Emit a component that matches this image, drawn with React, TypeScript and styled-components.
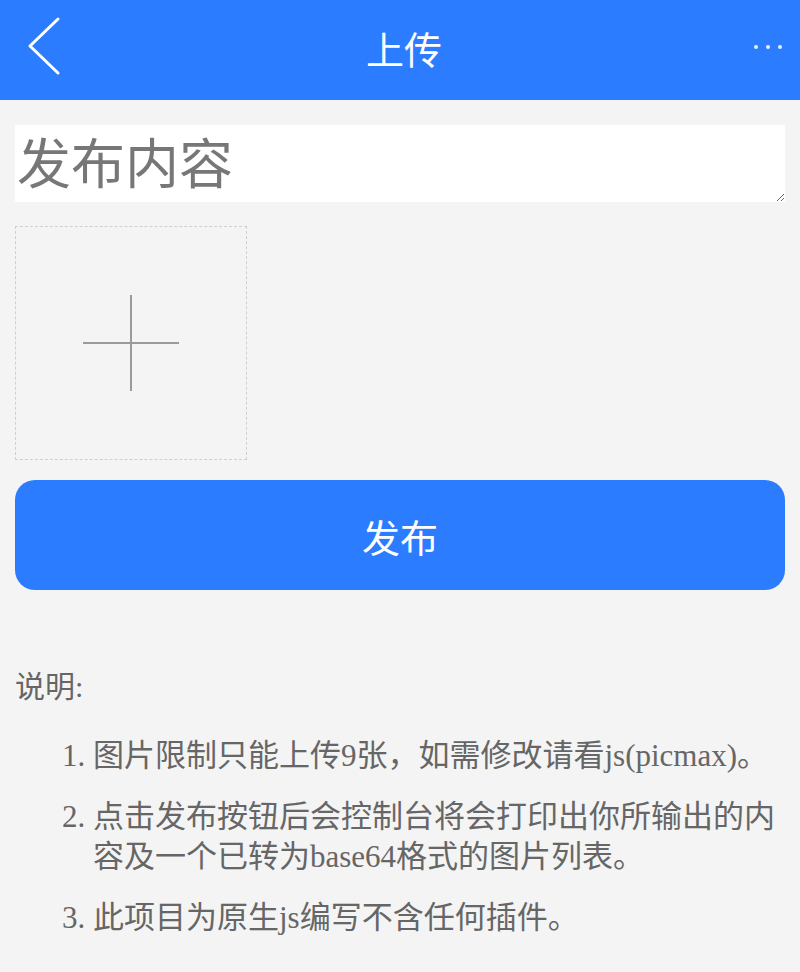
import React from "react";
import styled, { createGlobalStyle } from "styled-components";

const GlobalStyle = createGlobalStyle`
  html, body {
    margin: 0;
    padding: 0;
    background: #f4f4f4;
  }
  body {
    font-family: "Liberation Serif", "Noto Sans CJK SC", serif;
  }
`;

const notes = [
  "图片限制只能上传9张，如需修改请看js(picmax)。",
  "点击发布按钮后会控制台将会打印出你所输出的内容及一个已转为base64格式的图片列表。",
  "此项目为原生js编写不含任何插件。",
];

export default function App() {
  return (
    <>
      <GlobalStyle />
      <ScPage>
        <ScHeader>
          <ScBack aria-label="返回">
            <svg width="40" height="64" viewBox="0 0 40 64" fill="none">
              <path
                d="M32 4 L4 31 L32 58"
                stroke="#fff"
                strokeWidth="3"
                strokeLinecap="round"
                strokeLinejoin="round"
              />
            </svg>
          </ScBack>
          <ScTitle>上传</ScTitle>
          <ScMore aria-label="更多">
            <ScDot />
            <ScDot />
            <ScDot />
          </ScMore>
        </ScHeader>

        <ScContent>
          <ScTextArea placeholder="发布内容" />
          <ScUploadBox>
            <ScPlus />
          </ScUploadBox>
          <ScSubmit>发布</ScSubmit>

          <ScNoteTitle>说明:</ScNoteTitle>
          <ScNoteList>
            {notes.map((note) => (
              <ScNoteItem key={note}>{note}</ScNoteItem>
            ))}
          </ScNoteList>
        </ScContent>
      </ScPage>
    </>
  );
}

const ScPage = styled.div`
  min-height: 972px;
  background: #f4f4f4;
`;

const ScHeader = styled.header`
  height: 100px;
  background: #2b7cff;
  display: flex;
  align-items: center;
  justify-content: space-between;
  padding: 0 18px 0 26px;
  box-sizing: border-box;
`;

const ScBack = styled.div`
  width: 60px;
  height: 64px;
  display: flex;
  align-items: center;
  margin-top: -6px;
`;

const ScTitle = styled.h1`
  margin: -6px 0 0;
  font-family: "Noto Sans CJK SC", sans-serif;
  font-weight: 400;
  font-size: 38px;
  color: #fff;
`;

const ScMore = styled.div`
  width: 60px;
  display: flex;
  justify-content: flex-end;
  gap: 8px;
  margin-top: -6px;
`;

const ScDot = styled.span`
  width: 4px;
  height: 4px;
  border-radius: 50%;
  background: #e8f1ff;
`;

const ScContent = styled.main`
  padding: 25px 15px 0;
  display: flex;
  flex-direction: column;
`;

const ScTextArea = styled.textarea`
  display: block;
  width: 100%;
  height: 77px;
  box-sizing: border-box;
  border: none;
  outline: none;
  background: #fff;
  padding: 4px 2px 0;
  font-family: "Noto Sans CJK SC", sans-serif;
  font-size: 54px;
  line-height: 64px;
  color: #333;

  &::placeholder {
    color: #777;
  }
`;

const ScUploadBox = styled.div`
  margin-top: 24px;
  width: 232px;
  height: 234px;
  box-sizing: border-box;
  border: 1px dashed #cfcfcf;
  display: flex;
  align-items: center;
  justify-content: center;
`;

const ScPlus = styled.div`
  width: 96px;
  height: 96px;
  position: relative;

  &::before,
  &::after {
    content: "";
    position: absolute;
    background: #9a9a9a;
  }
  &::before {
    left: 0;
    right: 0;
    top: 47px;
    height: 2px;
  }
  &::after {
    top: 0;
    bottom: 0;
    left: 47px;
    width: 2px;
  }
`;

const ScSubmit = styled.button`
  margin-top: 20px;
  width: 100%;
  height: 110px;
  border: none;
  border-radius: 20px;
  background: #2b7cff;
  color: #fff;
  font-family: "Noto Sans CJK SC", sans-serif;
  font-size: 38px;
  cursor: pointer;
`;

const ScNoteTitle = styled.div`
  margin-top: 77px;
  font-size: 30px;
  line-height: 39px;
  color: #666;
`;

const ScNoteList = styled.ol`
  margin: 30px 0 0;
  padding-left: 78px;
  color: #666;
  font-size: 31px;
  line-height: 40px;
`;

const ScNoteItem = styled.li`
  margin-bottom: 21px;
`;
